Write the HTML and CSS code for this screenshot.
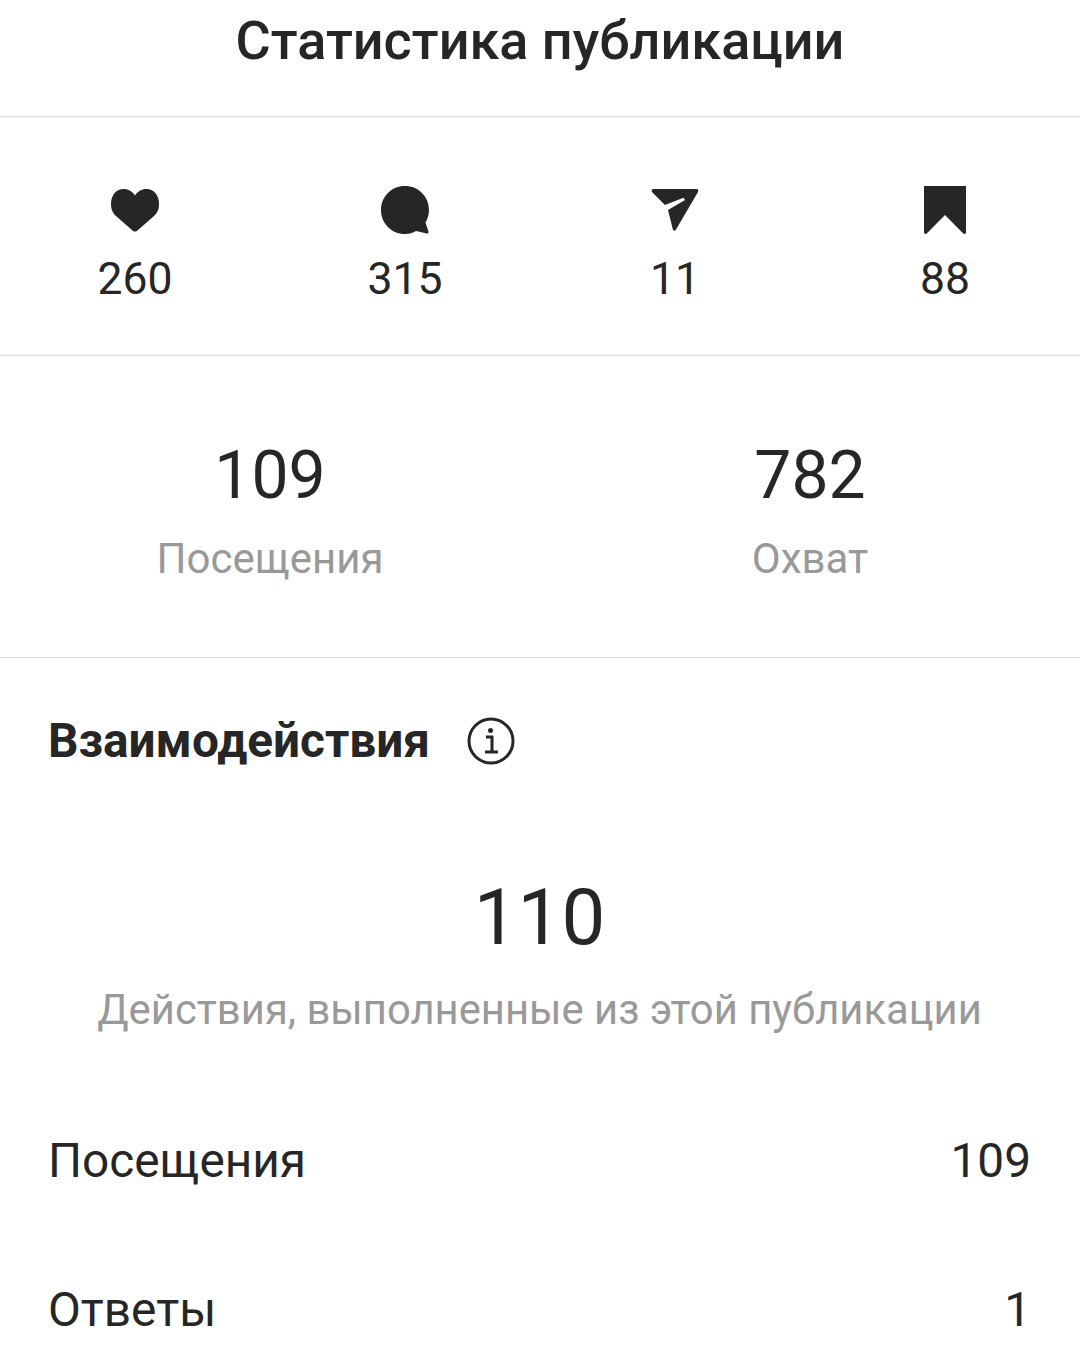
FILE: index.html
```html
<!DOCTYPE html>
<html lang="ru">
<head>
    <meta charset="UTF-8">
    <title>Статистика публикации</title>
    <link rel="stylesheet" href="styles.css">
</head>
<body>
    <header class="title-bar">Статистика публикации</header>

    <section class="counters">
        <div class="counter">
            <svg class="icon" viewBox="0 0 50 50"><path d="M25 46.500 C24 46.500 23.200 46 22.200 45.200 L6 31 C2.500 27.500 1 24.500 1 18.500 C1 10 6.500 4 13.500 4 C18.500 4 22.500 6.500 25 10.500 C27.500 6.500 31.500 4 36.500 4 C43.500 4 49 10 49 18.500 C49 24.500 47.500 27.500 44 31 L27.800 45.200 C26.800 46 26 46.500 25 46.500 Z"/></svg>
            <span>260</span>
        </div>
        <div class="counter">
            <svg class="icon" viewBox="0 0 50 50"><path d="M25 1 C38.500 1 49 11.500 49 25 C49 29.500 47.500 34 45.500 37.500 L48.500 46.800 C48.800 48 47.800 48.800 46.800 48.500 L36 46 C33 48 29.500 49 25 49 C11.500 49 1 38.500 1 25 C1 11.500 11.500 1 25 1 Z"/></svg>
            <span>315</span>
        </div>
        <div class="counter">
            <svg class="icon" viewBox="0 0 50 50"><path d="M3.500 4 H46.500 C48 4 48.800 5.500 48 7 L26 44.500 C25 46.300 23.200 46 22.800 44.300 L18 25 L35 15 L33.500 12.800 L15 20 L2 7 C1 5.800 2 4 3.500 4 Z"/></svg>
            <span>11</span>
        </div>
        <div class="counter">
            <svg class="icon" viewBox="0 0 50 50"><path d="M4 1 H46 V47 C46 49 44.500 49.500 43 48.300 L25 30 L7 48.300 C5.500 49.500 4 49 4 47 Z"/></svg>
            <span>88</span>
        </div>
    </section>

    <section class="reach">
        <div class="reach-item">
            <div class="reach-value">109</div>
            <div class="reach-label">Посещения</div>
        </div>
        <div class="reach-item">
            <div class="reach-value">782</div>
            <div class="reach-label">Охват</div>
        </div>
    </section>

    <section class="actions">
        <div class="actions-head">
            <h2>Взаимодействия</h2>
            <svg class="info" viewBox="0 0 48 48">
                <circle cx="24" cy="24" r="22" fill="none" stroke="#262626" stroke-width="3"/>
                <circle cx="23.500" cy="13.500" r="2.500" fill="#262626"/>
                <path d="M19 20 H25 V34 M18 35 H31" fill="none" stroke="#262626" stroke-width="3"/>
            </svg>
        </div>
        <div class="total">
            <div class="total-value">110</div>
            <div class="total-label">Действия, выполненные из этой публикации</div>
        </div>
        <div class="row"><span>Посещения</span><span>109</span></div>
        <div class="row"><span>Ответы</span><span>1</span></div>
    </section>
</body>
</html>
```

FILE: styles.css
```css
html, body {
    height: 100%;
}

body {
    font-family: Roboto, "Liberation Sans", sans-serif;
    margin: 0;
    background-color: #fff;
    color: #262626;
    overflow: hidden;
}

.title-bar {
    height: 117px;
    padding-bottom: 35px;
    box-sizing: border-box;
    display: flex;
    justify-content: center;
    align-items: center;
    font-size: 54px;
    font-weight: 500;
    border-bottom: 1px solid #dbdbdb;
}

.counters {
    display: grid;
    grid-template-columns: repeat(4, 1fr);
    height: 239px;
    box-sizing: border-box;
    padding-top: 68px;
    border-bottom: 1px solid #dbdbdb;
}

.counter {
    display: flex;
    flex-direction: column;
    align-items: center;
    font-size: 44.500px;
}

.counter span {
    line-height: 52px;
    margin-top: 18px;
}

.icon {
    width: 50px;
    height: 50px;
    fill: #262626;
}

.reach {
    display: grid;
    grid-template-columns: repeat(2, 1fr);
    height: 302px;
    box-sizing: border-box;
    padding-top: 84px;
    border-bottom: 1px solid #dbdbdb;
    text-align: center;
}

.reach-value {
    font-size: 66px;
    line-height: 72px;
}

.reach-label {
    font-size: 42px;
    line-height: 50px;
    margin-top: 22px;
    color: #999;
}

.actions {
    padding: 0 49px 0 48px;
}

.actions-head {
    display: flex;
    align-items: center;
    gap: 37px;
    height: 166px;
}

.actions-head h2 {
    margin: 0;
    font-size: 47.750px;
    font-weight: 700;
}

.info {
    width: 48px;
    height: 48px;
}

.total {
    text-align: center;
    margin-top: 50px;
}

.total-value {
    font-size: 78px;
    line-height: 88px;
}

.total-label {
    font-size: 41.800px;
    line-height: 50px;
    margin-top: 23px;
    color: #999;
}

.row {
    display: flex;
    justify-content: space-between;
    font-size: 47.750px;
    line-height: 54px;
    margin-top: 99px;
}

.row + .row {
    margin-top: 95px;
}
```
